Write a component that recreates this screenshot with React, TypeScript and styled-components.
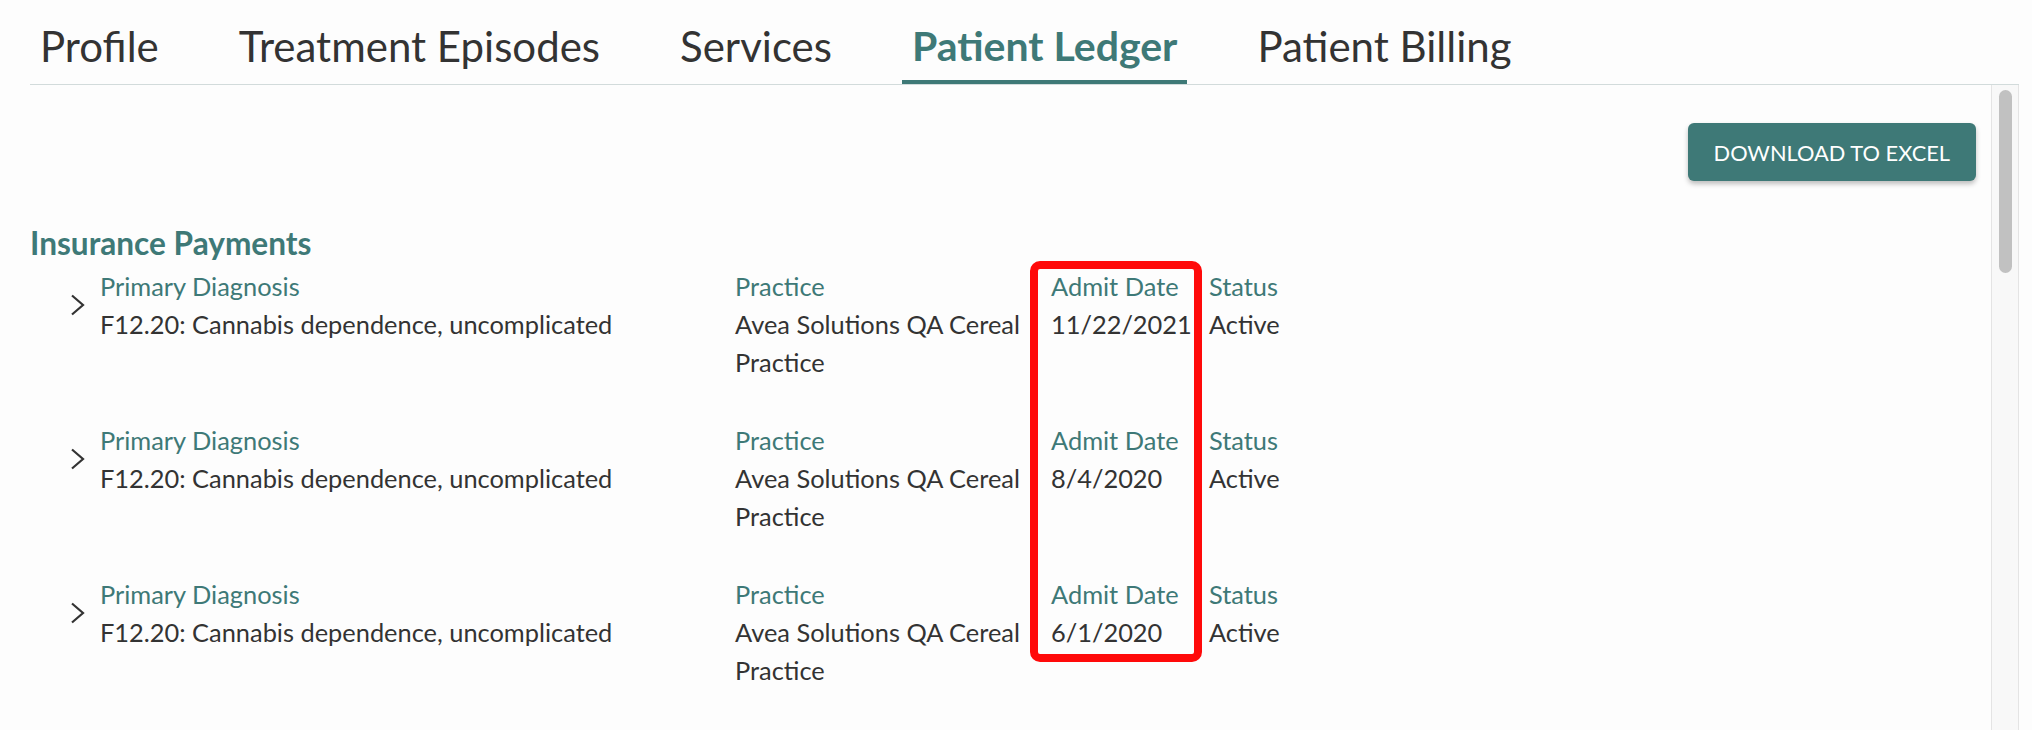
import React from 'react'
import styled, { createGlobalStyle } from 'styled-components'

const GlobalStyle = createGlobalStyle`
  html, body {
    margin: 0;
    padding: 0;
    background: #fdfdfd;
    font-family: Lato, "Open Sans", sans-serif;
    color: #333;
  }
`

const teal = '#3e7977'

const Page = styled.div`
  height: 730px;
  display: flex;
  flex-direction: column;
  padding: 0 13px 0 30px;
  overflow: hidden;
`

const TabBar = styled.nav`
  display: flex;
  gap: 60px;
  height: 84px;
  border-bottom: 1px solid #d2dbdb;
  flex-shrink: 0;
`

const Tab = styled.div<{ active?: boolean }>`
  display: flex;
  align-items: center;
  padding: 11px 10px 0;
  font-size: ${p => (p.active ? '41px' : '42px')};
  color: ${p => (p.active ? teal : '#333')};
  font-weight: ${p => (p.active ? 700 : 400)};
  border-bottom: 4px solid ${p => (p.active ? teal : 'transparent')};
`

const Panel = styled.div`
  flex: 1;
  display: flex;
  min-height: 0;
`

const Content = styled.main`
  flex: 1;
  overflow: hidden;
`

const ScrollTrack = styled.div`
  width: 26px;
  flex-shrink: 0;
  background: #f8f8f8;
  border-left: 1px solid #e4e4e4;
  border-right: 1px solid #e4e4e4;
`

const ScrollThumb = styled.div`
  margin: 5px 6px 0 7px;
  height: 183px;
  border-radius: 8px;
  background: #c1c1c1;
`

const Toolbar = styled.div`
  display: flex;
  justify-content: flex-end;
  padding: 38px 15px 0 0;
`

const ExcelButton = styled.button`
  height: 58px;
  padding: 0 26px;
  border: none;
  border-radius: 6px;
  background: ${teal};
  color: #fff;
  font-family: Lato, sans-serif;
  font-size: 21.8px;
  box-shadow: 0 3px 5px rgba(0, 0, 0, 0.25);
  cursor: pointer;
`

const SectionTitle = styled.h2`
  margin: 43px 0 5px;
  font-size: 31.6px;
  line-height: 38px;
  font-weight: 700;
  color: ${teal};
`

const List = styled.div`
  position: relative;
`

const Row = styled.div`
  display: grid;
  grid-template-columns: 70px 635px 316px 158px 1fr;
  padding-bottom: 40px;
  font-size: 25.4px;
  line-height: 38px;
`

const Toggle = styled.div`
  display: flex;
  justify-content: flex-end;
  padding: 27px 15px 0 0;
`

const Cell = styled.div`
  padding-right: 16px;
`

const Label = styled.div`
  color: ${teal};
`

const Value = styled.div`
  color: #333;
`

const Highlight = styled.div`
  position: absolute;
  left: 1000px;
  top: -6px;
  width: 172px;
  height: 401px;
  box-sizing: border-box;
  border: 8px solid #ff0a0a;
  border-radius: 10px;
  pointer-events: none;
`

function Chevron () {
  return (
    <svg width='15' height='22' viewBox='0 0 15 22' fill='none'>
      <path d='M2 1.5 L13 11 L2 20.5' stroke='#333' strokeWidth='2.2' />
    </svg>
  )
}

const tabs = ['Profile', 'Treatment Episodes', 'Services', 'Patient Ledger', 'Patient Billing']

const dates = ['11/22/2021', '8/4/2020', '6/1/2020']

export default function App () {
  return (
    <>
      <GlobalStyle />
      <Page>
        <TabBar>
          {tabs.map(t => (
            <Tab key={t} active={t === 'Patient Ledger'}>{t}</Tab>
          ))}
        </TabBar>
        <Panel>
          <Content>
            <Toolbar>
              <ExcelButton>DOWNLOAD TO EXCEL</ExcelButton>
            </Toolbar>
            <SectionTitle>Insurance Payments</SectionTitle>
            <List>
              {dates.map((d, i) => (
                <Row key={i}>
                  <Toggle><Chevron /></Toggle>
                  <Cell>
                    <Label>Primary Diagnosis</Label>
                    <Value>F12.20: Cannabis dependence, uncomplicated</Value>
                  </Cell>
                  <Cell>
                    <Label>Practice</Label>
                    <Value>Avea Solutions QA Cereal Practice</Value>
                  </Cell>
                  <Cell>
                    <Label>Admit Date</Label>
                    <Value>{d}</Value>
                  </Cell>
                  <Cell>
                    <Label>Status</Label>
                    <Value>Active</Value>
                  </Cell>
                </Row>
              ))}
              <Highlight />
            </List>
          </Content>
          <ScrollTrack>
            <ScrollThumb />
          </ScrollTrack>
        </Panel>
      </Page>
    </>
  )
}
